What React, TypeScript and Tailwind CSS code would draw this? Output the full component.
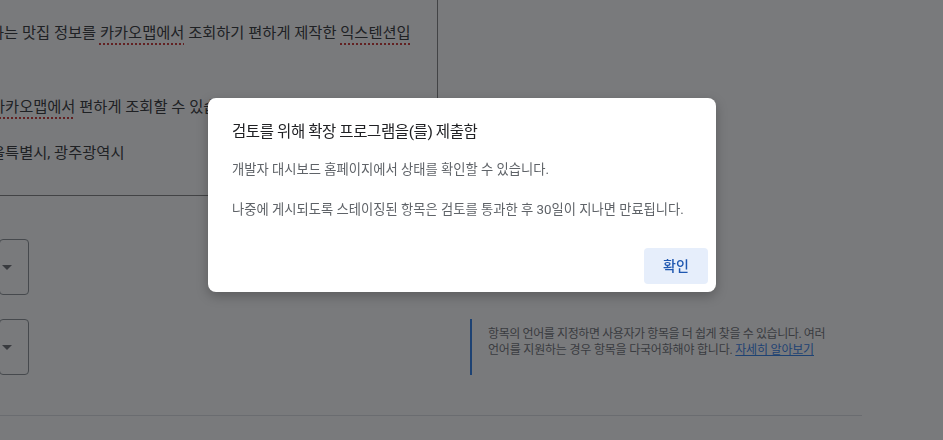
const spell =
  "underline decoration-dotted decoration-[#c5221f] decoration-[1.5px] underline-offset-[5px]";

function Select() {
  return (
    <div className="flex h-[56px] w-[30px] -ml-[1px] items-center rounded-[4px] border border-[#80868b] pl-[2px]">
      <svg width="10" height="5" viewBox="0 0 10 5" className="mt-[1px]">
        <path d="M0 0h10L5 5z" fill="#5f6368" />
      </svg>
    </div>
  );
}

export default function App() {
  return (
    <div className="relative h-[440px] w-[943px] overflow-hidden bg-white font-['Roboto','Noto_Sans_CJK_KR',sans-serif]">
      {/* page underneath */}
      <div className="flex flex-col">
        <div className="h-[196px] w-[438px] border-r border-b border-[#757575] pt-[20px] text-[15.3px] leading-[26px] text-[#202124]">
          <p className="-ml-[10px] whitespace-nowrap">
            하는 맛집 정보를 <span className={spell}>카카오맵에서</span> 조회하기 편하게
            제작한 <span className={spell}>익스텐션입</span>
          </p>
          <p className="-ml-[9px] mt-[48px] whitespace-nowrap">
            <span className={spell}>카카오맵에서</span> 편하게 조회할 수 있습니다.
          </p>
          <p className="-ml-[9px] mt-[20px] whitespace-nowrap">울특별시, 광주광역시</p>
        </div>

        <div className="mt-[43px]">
          <Select />
        </div>

        <div className="mt-[24px] flex">
          <div className="w-[470px]">
            <Select />
          </div>
          <div className="border-l-2 border-[#1a73e8] py-[7px] pl-[16px] text-[12px] leading-[16px] text-[#5f6368]">
            <p className="whitespace-nowrap tracking-[-0.4px]">
              항목의 언어를 지정하면 사용자가 항목을 더 쉽게 찾을 수 있습니다. 여러
            </p>
            <p className="whitespace-nowrap tracking-[-0.2px]">
              언어를 지원하는 경우 항목을 다국어화해야 합니다.{" "}
              <a href="#" className="text-[#1a73e8] underline">
                자세히 알아보기
              </a>
            </p>
          </div>
        </div>

        <div className="mt-[40px] h-px w-[862px] bg-[#dadce0]" />
      </div>

      {/* scrim */}
      <div className="fixed inset-0 bg-[rgba(32,33,36,0.6)]" />

      {/* dialog */}
      <div className="absolute left-[208px] top-[98px] flex h-[194px] w-[508px] flex-col rounded-[8px] bg-white shadow-[0_4px_12px_rgba(0,0,0,0.25)]">
        <h2 className="px-[24px] pt-[23px] text-[15.5px] leading-[22px] font-normal tracking-[-0.4px] text-[#202124]">
          검토를 위해 확장 프로그램을(를) 제출함
        </h2>
        <div className="px-[24px] pt-[17px] text-[13.3px] leading-[20px] text-[#5f6368]">
          <p>개발자 대시보드 홈페이지에서 상태를 확인할 수 있습니다.</p>
          <p className="mt-[20px]">
            나중에 게시되도록 스테이징된 항목은 검토를 통과한 후 30일이 지나면 만료됩니다.
          </p>
        </div>
        <div className="mt-auto flex justify-end p-[8px]">
          <button className="h-[36px] w-[64px] rounded-[4px] bg-[#e6eefb] text-[14px] font-medium text-[#1f57b0]">
            확인
          </button>
        </div>
      </div>
    </div>
  );
}
